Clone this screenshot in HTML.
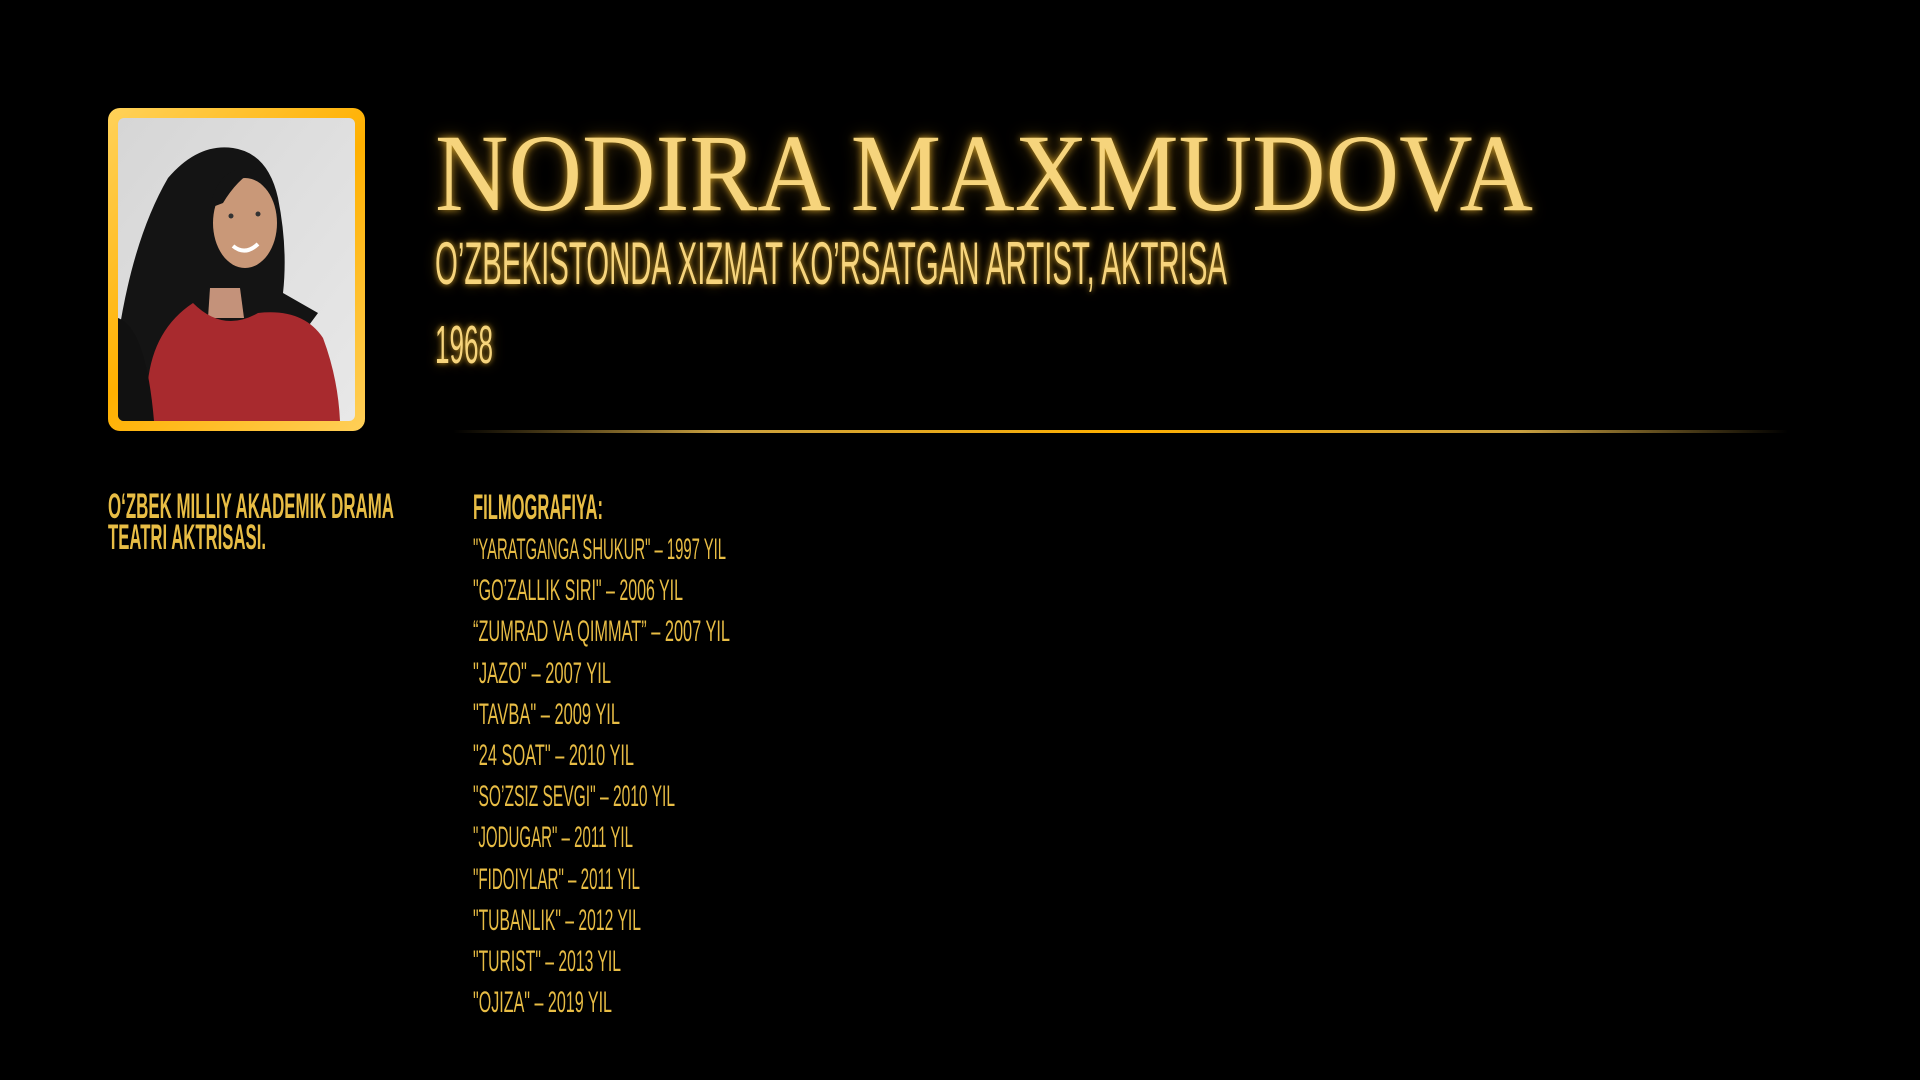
<!DOCTYPE html>
<html><head><meta charset="utf-8">
<style>
html,body{margin:0;padding:0;background:#000;width:1920px;height:1080px;overflow:hidden;}
.a{position:absolute;white-space:nowrap;transform-origin:0 0;}
.gl{color:#f6d47c;text-shadow:0 0 8px rgba(255,196,50,.75),0 0 18px rgba(255,180,40,.35);}
.n{font-family:"Liberation Sans Narrow","Liberation Sans",sans-serif;}
.list{color:#e8bd45;font-family:"Liberation Sans Narrow","Liberation Sans",sans-serif;font-size:30px;line-height:30px;}
</style></head><body>
<div style="position:absolute;left:108px;top:108px;width:257px;height:323px;border-radius:12px;background:linear-gradient(135deg,#ffd25a,#ffb000 50%,#ffcf58);"></div>
<svg style="position:absolute;left:118px;top:118px;border-radius:6px" width="237" height="303" viewBox="0 0 237 303">
<defs><linearGradient id="bg" x1="0" y1="0" x2="1" y2="1"><stop offset="0" stop-color="#d6d6d6"/><stop offset="1" stop-color="#e8e8e8"/></linearGradient></defs>
<rect width="237" height="303" fill="url(#bg)"/>
<path d="M0 303 L0 220 Q15 120 50 60 Q80 25 115 30 Q150 35 160 80 Q170 130 165 175 L200 195 L120 303 Z" fill="#141414"/>
<path d="M92 170 L122 170 L126 200 L90 200 Z" fill="#c4927a"/>
<ellipse cx="127" cy="105" rx="32" ry="45" fill="#c99878"/>
<path d="M92 90 Q100 45 140 50 Q120 60 105 85 Z" fill="#141414"/>
<path d="M30 303 Q22 220 75 185 Q105 215 140 195 Q185 190 205 220 Q220 260 222 303 Z" fill="#a82a2e"/>
<path d="M0 303 L0 200 Q28 210 36 303 Z" fill="#111"/>
<path d="M115 128 Q127 138 140 126" stroke="#fff" stroke-width="4" fill="none"/>
<circle cx="113" cy="98" r="2.5" fill="#333"/><circle cx="140" cy="96" r="2.5" fill="#333"/>
</svg>

<div class="a gl fit" style="left:435px;top:118px;font-family:'Liberation Serif',serif;font-size:110px;line-height:110px;--w:1098" >NODIRA MAXMUDOVA</div>
<div class="a gl n fit" style="left:435px;top:234px;font-size:60px;line-height:60px;--w:792">O’ZBEKISTONDA XIZMAT KO’RSATGAN ARTIST, AKTRISA</div>
<div class="a gl n fit" style="left:435px;top:318px;font-size:54px;line-height:54px;--w:58">1968</div>
<div class="a" style="left:453px;top:430px;width:1335px;height:3px;background:linear-gradient(90deg,rgba(150,120,60,0),#c9a040 20%,#ffb000 50%,#c9a040 80%,rgba(150,120,60,0));"></div>

<div class="a list fit" style="left:108px;top:489px;font-weight:bold;font-size:35px;line-height:35px;--w:286">O‘ZBEK MILLIY AKADEMIK DRAMA</div>
<div class="a list fit" style="left:108px;top:520px;font-weight:bold;font-size:35px;line-height:35px;--w:158">TEATRI AKTRISASI.</div>
<div class="a list fit" style="left:473px;top:490px;font-weight:bold;font-size:35px;line-height:35px;--w:130">FILMOGRAFIYA:</div>

<div class="a list fit" style="left:473px;top:535px;--w:253">"YARATGANGA SHUKUR" – 1997 YIL</div>
<div class="a list fit" style="left:473px;top:576px;--w:210">"GO’ZALLIK SIRI" – 2006 YIL</div>
<div class="a list fit" style="left:473px;top:617px;--w:257">“ZUMRAD VA QIMMAT” – 2007 YIL</div>
<div class="a list fit" style="left:473px;top:659px;--w:138">"JAZO" – 2007 YIL</div>
<div class="a list fit" style="left:473px;top:700px;--w:147">"TAVBA" – 2009 YIL</div>
<div class="a list fit" style="left:473px;top:741px;--w:161">"24 SOAT" – 2010 YIL</div>
<div class="a list fit" style="left:473px;top:782px;--w:202">"SO’ZSIZ SEVGI" – 2010 YIL</div>
<div class="a list fit" style="left:473px;top:823px;--w:160">"JODUGAR" – 2011 YIL</div>
<div class="a list fit" style="left:473px;top:865px;--w:167">"FIDOIYLAR" – 2011 YIL</div>
<div class="a list fit" style="left:473px;top:906px;--w:168">"TUBANLIK" – 2012 YIL</div>
<div class="a list fit" style="left:473px;top:947px;--w:148">"TURIST" – 2013 YIL</div>
<div class="a list fit" style="left:473px;top:988px;--w:139">"OJIZA" – 2019 YIL</div>
<script>
document.querySelectorAll('.fit').forEach(function(e){
 var w=parseFloat(getComputedStyle(e).getPropertyValue('--w'));
 var r=e.getBoundingClientRect().width;
 if(w&&r) e.style.transform='scaleX('+(w/r)+')';
});
</script>
</body></html>
